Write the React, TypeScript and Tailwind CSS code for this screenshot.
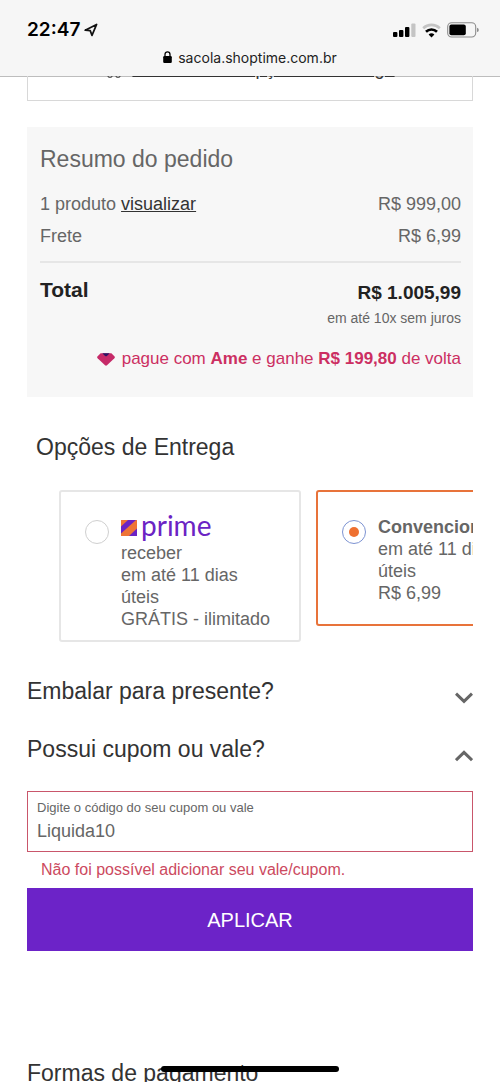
import { useState } from "react";

function LocationArrow() {
  return (
    <svg className="size-[14px]" viewBox="0 0 14 14" aria-hidden="true">
      <path d="M12.6 1.4 L8 12.4 L6.2 7.6 L1.2 7.2 Z" fill="none" stroke="#111" strokeWidth="1.7" strokeLinejoin="round" />
    </svg>
  );
}

function Signal() {
  return (
    <svg className="h-[15px] w-[23px]" viewBox="0 0 23 15" aria-hidden="true">
      <rect x="0" y="9" width="4.4" height="5" rx="1" />
      <rect x="6" y="7" width="4.4" height="7" rx="1" />
      <rect x="12" y="4" width="4.4" height="10" rx="1" />
      <rect x="18.3" y="0.5" width="4.2" height="13.5" rx="1" fill="#c4c4c4" />
    </svg>
  );
}

function Wifi() {
  return (
    <svg className="h-[15px] w-[19px]" viewBox="0 0 19 15" aria-hidden="true" fill="none">
      <path d="M1.2 5.2 A12 12 0 0 1 17.8 5.2" stroke="#c4c4c4" strokeWidth="2.6" />
      <path d="M4 8.7 A8 8 0 0 1 15 8.7" stroke="#000" strokeWidth="2.7" />
      <path d="M9.5 14.4 L6.6 11.6 A4.2 4.2 0 0 1 12.4 11.6 Z" fill="#000" />
    </svg>
  );
}

function Battery() {
  return (
    <svg className="h-4 w-8" viewBox="0 0 32 16" aria-hidden="true">
      <rect x="0.7" y="0.8" width="28" height="14.2" rx="4" fill="none" stroke="#8c8c8c" strokeWidth="1.1" />
      <rect x="2.4" y="2.6" width="16.4" height="10.6" rx="2" />
      <path d="M30 5.8 Q31.8 6.2 31.8 7.9 Q31.8 9.6 30 10 Z" fill="#8c8c8c" />
    </svg>
  );
}

function Lock() {
  return (
    <svg className="h-3 w-[9px]" viewBox="0 0 9 12" aria-hidden="true">
      <rect x="0.2" y="5" width="8.6" height="7" rx="1.2" />
      <path d="M2 5.5 V3.4 A2.5 2.6 0 0 1 7 3.4 V5.5" fill="none" stroke="#000" strokeWidth="1.3" />
    </svg>
  );
}

function Truck() {
  return (
    <svg className="h-[18px] w-[18px]" viewBox="0 0 18 18" fill="none" stroke="#555" strokeWidth="1.4" aria-hidden="true">
      <path d="M1 2 H11 V12 H1 Z M11 5 H14.5 L17 8.5 V12 H11" />
      <circle cx="5" cy="13" r="2.2" fill="#fff" />
      <circle cx="13" cy="13" r="2.2" fill="#fff" />
    </svg>
  );
}

function AmeHeart() {
  return (
    <svg className="h-[13px] w-[18px]" viewBox="0 0 18 13" aria-hidden="true">
      <path d="M3.6 0.3 H14.4 L17.6 3.4 Q18.2 4.3 17.4 5.2 L10 12.3 Q9 13.2 8 12.3 L0.6 5.2 Q-0.2 4.3 0.4 3.4 Z" fill="#c62a68" />
      <path d="M5.3 0.3 H12.7 L9.9 3 Q9 3.7 8.1 3 Z" fill="#2b1464" />
    </svg>
  );
}

function PrimeMark() {
  return (
    <svg className="mt-1 size-4" viewBox="0 0 16 16" aria-hidden="true">
      <rect width="16" height="16" fill="#ee7436" />
      <path d="M7 0 H15 L0 13.5 V6.5 Z" fill="#6b23c4" />
      <path d="M16 8.5 V16 H8 Z" fill="#6b23c4" />
    </svg>
  );
}

function Chevron({ open }: { open: boolean }) {
  return (
    <svg className="h-5 w-[18px]" viewBox="0 0 18 20" fill="none" stroke="#666" strokeWidth="3" aria-hidden="true">
      <path d={open ? "M1 15.2 L9 7.4 L17 15.2" : "M1 6.6 L9 14.4 L17 6.6"} />
    </svg>
  );
}

function Accordion({ title, open, onToggle }: { title: string; open: boolean; onToggle: () => void }) {
  return (
    <h2>
      <button type="button" aria-expanded={open} onClick={onToggle} className="flex w-full items-end justify-between text-left text-[23px] leading-8">
        {title}
        <Chevron open={open} />
      </button>
    </h2>
  );
}

const radioClass =
  "grid size-6 shrink-0 appearance-none place-items-center rounded-full border border-[#cfcfcf] bg-white before:size-[10px] before:rounded-full checked:border-[#7d93d2] checked:before:bg-[#ee7030]";

export default function App() {
  const [delivery, setDelivery] = useState("convencional");
  const [gift, setGift] = useState(false);
  const [coupon, setCoupon] = useState(true);
  const [code, setCode] = useState("Liquida10");

  return (
    <div className="relative h-screen overflow-hidden bg-white font-['Liberation_Sans',Arial,sans-serif] text-[#333]">
      <header className="border-b border-[#bdbdbd] bg-[#f6f6f6] pt-[18px] pb-2 font-['Inter',sans-serif] text-black">
        <div className="flex h-6 items-center justify-between pr-[21px] pl-[27px]">
          <div className="flex items-center gap-1">
            <span className="text-[19px] font-semibold">22:47</span>
            <LocationArrow />
          </div>
          <div className="flex items-center gap-[6px]">
            <Signal />
            <Wifi />
            <Battery />
          </div>
        </div>
        <div className="mt-1 flex h-[22px] items-center justify-center gap-[6px]">
          <Lock />
          <span className="text-[14px] text-[#222]">sacola.shoptime.com.br</span>
        </div>
      </header>

      <main className="px-[27px]">
        <section className="-mt-px flex h-[25px] flex-col items-center justify-end overflow-hidden border-x border-b border-[#d8d8d8] pb-5">
          <a href="#entrega" className="flex items-end gap-[9px] text-[18px] leading-[22px]">
            <Truck />
            <span className="underline">Verificar mais opções de entrega</span>
          </a>
        </section>

        <section className="mt-[26px] bg-[#f7f7f7] pt-4 pr-3 pb-[26px] pl-[13px] text-[#666]">
          <h2 className="text-[23px] leading-8">Resumo do pedido</h2>
          <div className="mt-[13px] flex justify-between text-[18px] leading-8">
            <span>
              1 produto <a href="#produtos" className="text-[#333] underline">visualizar</a>
            </span>
            <span>R$ 999,00</span>
          </div>
          <div className="flex justify-between text-[18px] leading-8">
            <span>Frete</span>
            <span>R$ 6,99</span>
          </div>
          <hr className="mt-[9px] border-t-2 border-[#e6e6e6]" />
          <div className="mt-4 flex items-start justify-between">
            <span className="text-[21px] leading-[22px] font-bold text-[#222]">Total</span>
            <div className="text-right">
              <p className="text-[19px] leading-7 font-bold text-[#222]">R$ 1.005,99</p>
              <p className="text-[14px] leading-[22px]">em até 10x sem juros</p>
            </div>
          </div>
          <p className="mt-[18px] flex items-center justify-end gap-[7px] text-[17px] leading-6 text-[#cc2f62]">
            <AmeHeart />
            <span>
              pague com <b>Ame</b> e ganhe <b>R$ 199,80</b> de volta
            </span>
          </p>
        </section>

        <section id="entrega">
          <h2 className="mt-[34px] pl-[9px] text-[23px] leading-8">Opções de Entrega</h2>
          <div className="mt-[27px] flex items-start gap-[15px] overflow-hidden pl-8 text-[18px] leading-[22px] text-[#666]">
            <label className="flex w-[242px] shrink-0 gap-3 rounded-[3px] border-2 border-[#e6e6e6] pt-6 pr-2 pb-[10px] pl-6">
              <span className="pt-1">
                <input type="radio" name="entrega" checked={delivery === "prime"} onChange={() => setDelivery("prime")} className={radioClass} />
              </span>
              <span>
                <span className="flex h-[26px] items-start gap-1">
                  <PrimeMark />
                  <span className="font-['Lato',sans-serif] text-[28px] leading-[18px] text-[#6b23c4]">prime</span>
                </span>
                <span className="block">receber</span>
                <span className="block">em até 11 dias</span>
                <span className="block">úteis</span>
                <span className="block whitespace-nowrap">GRÁTIS - ilimitado</span>
              </span>
            </label>
            <label className="flex w-[242px] shrink-0 gap-3 rounded-[3px] border-2 border-[#e8733a] pt-6 pr-2 pb-5 pl-6">
              <span className="pt-1">
                <input type="radio" name="entrega" checked={delivery === "convencional"} onChange={() => setDelivery("convencional")} className={radioClass} />
              </span>
              <span>
                <b className="block">Convencional</b>
                <span className="block">em até 11 dias</span>
                <span className="block">úteis</span>
                <span className="block">R$ 6,99</span>
              </span>
            </label>
          </div>
        </section>

        <section className="mt-[33px]">
          <Accordion title="Embalar para presente?" open={gift} onToggle={() => setGift(!gift)} />
        </section>

        <section className="mt-[26px]">
          <Accordion title="Possui cupom ou vale?" open={coupon} onToggle={() => setCoupon(!coupon)} />
          {coupon && (
            <form onSubmit={(e) => e.preventDefault()} className="mt-[26px]">
              <div className="flex flex-col border border-[#c9566b] px-[9px] pt-[6px] pb-[7px] text-[#666]">
                <label htmlFor="cupom" className="text-[13px] leading-5">
                  Digite o código do seu cupom ou vale
                </label>
                <input id="cupom" value={code} onChange={(e) => setCode(e.target.value)} className="h-[26px] w-full text-[18px] leading-[26px] outline-none" />
              </div>
              <p className="mt-[7px] pl-[14px] text-[16px] leading-[22px] text-[#cc4a60]">Não foi possível adicionar seu vale/cupom.</p>
              <button type="submit" className="mt-[7px] h-[63px] w-full bg-[#6c23c8] text-[20px] text-white">
                APLICAR
              </button>
            </form>
          )}
        </section>

        <h2 className="mt-[106px] text-[23px] leading-8">Formas de pagamento</h2>
      </main>

      <div className="absolute bottom-[10px] left-1/2 h-[6px] w-[178px] -translate-x-1/2 rounded-full bg-black" />
    </div>
  );
}
